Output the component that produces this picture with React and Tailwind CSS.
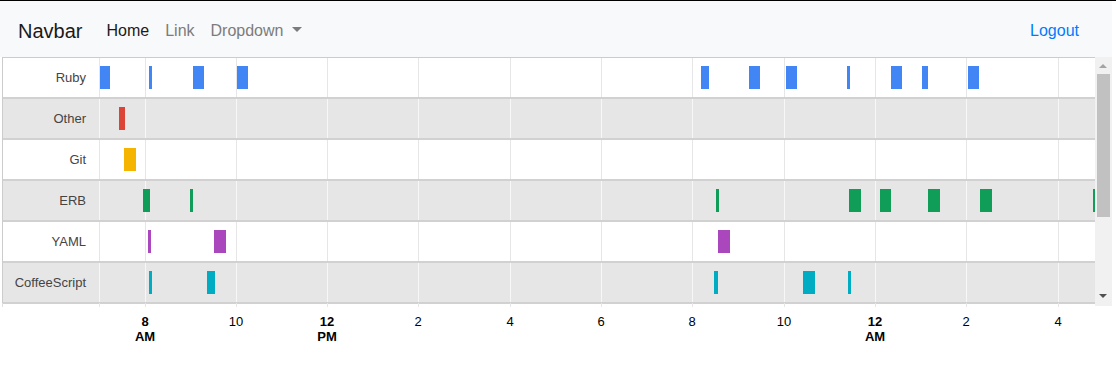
const rows = [
  { label: 'Ruby', color: '#4285f4', bars: [[1, 10], [50, 3], [94, 11], [138, 11], [602, 8], [650, 11], [687, 11], [748, 3], [792, 11], [823, 6], [869, 11]] },
  { label: 'Other', color: '#db4437', bars: [[20, 6]] },
  { label: 'Git', color: '#f4b400', bars: [[25, 12]] },
  { label: 'ERB', color: '#0f9d58', bars: [[44, 7], [91, 3], [617, 3], [750, 12], [781, 11], [829, 12], [881, 12], [994, 6]] },
  { label: 'YAML', color: '#ab47bc', bars: [[49, 3], [115, 12], [619, 12]] },
  { label: 'CoffeeScript', color: '#00acc1', bars: [[50, 3], [108, 8], [615, 4], [704, 12], [749, 3]] },
];

// gridlines, relative to the start of the timeline track (x = 99)
const grid = [0, 46, 137, 228, 319, 411, 502, 593, 685, 776, 867, 959];

const ticks = [
  { x: 145, top: '8', bottom: 'AM' },
  { x: 236, top: '10' },
  { x: 327, top: '12', bottom: 'PM' },
  { x: 418, top: '2' },
  { x: 510, top: '4' },
  { x: 601, top: '6' },
  { x: 692, top: '8' },
  { x: 784, top: '10' },
  { x: 875, top: '12', bottom: 'AM' },
  { x: 966, top: '2' },
  { x: 1058, top: '4' },
];

function Navbar() {
  return (
    <nav className="w-[1112px] h-[56px] bg-[#f8f9fa] flex items-center justify-between pl-[18px] pr-[25px] pt-[3px]">
      <div className="flex items-center">
        <a className="text-[20px] text-[#1a1a1a] mr-4">Navbar</a>
        <a className="px-2 text-[16px] text-[#1a1a1a]">Home</a>
        <a className="px-2 text-[16px] text-[#7c7c7d]">Link</a>
        <a className="px-2 text-[16px] text-[#7c7c7d] flex items-center">
          Dropdown
          <span className="ml-[9px] mb-[2px] w-0 h-0 border-x-[5px] border-x-transparent border-t-[5px] border-t-[#7c7c7d]" />
        </a>
      </div>
      <a className="px-2 text-[16px] text-[#007bff]">Logout</a>
    </nav>
  );
}

function Scrollbar() {
  return (
    <div className="relative w-[17px] h-[249px] bg-[#f1f1f1]">
      <span className="absolute left-[4px] top-[7px] w-0 h-0 border-x-[4px] border-x-transparent border-b-[4px] border-b-[#a3a3a3]" />
      <div className="absolute left-[2px] top-[17px] w-[13px] h-[143px] bg-[#c1c1c1]" />
      <span className="absolute left-[4px] top-[237px] w-0 h-0 border-x-[4px] border-x-transparent border-t-[4px] border-t-[#505050]" />
    </div>
  );
}

function Timeline() {
  return (
    <div className="flex ml-[2px]">
      <div className="w-[1093px] border-t border-l border-[#cccccc]">
        {rows.map((row, i) => {
          const shaded = i % 2 === 1;
          return (
            <div
              key={row.label}
              className={`flex h-[41px] border-b-2 border-[#d1d1d1] ${shaded ? 'bg-[#e6e6e6]' : 'bg-white'}`}
            >
              <div className="w-[96px] shrink-0 flex items-center justify-end pr-[13px] text-[13px] text-[#444444]">
                {row.label}
              </div>
              <div className="relative flex-1 overflow-hidden">
                {grid.map((g) => (
                  <div
                    key={g}
                    className={`absolute top-0 bottom-0 w-px ${shaded ? 'bg-[#f7f7f7]' : 'bg-[#e6e6e6]'}`}
                    style={{ left: g }}
                  />
                ))}
                {row.bars.map(([left, width], j) => (
                  <div
                    key={j}
                    className="absolute top-[8px] h-[23px]"
                    style={{ left, width, background: row.color }}
                  />
                ))}
              </div>
            </div>
          );
        })}
      </div>
      <Scrollbar />
    </div>
  );
}

function Axis() {
  return (
    <div className="relative h-[60px] -mt-[3px]">
      <div className="absolute left-[2px] top-0 w-px h-[4px] bg-[#e0e0e0]" />
      {grid.map((g) => (
        <div key={g} className="absolute top-0 w-px h-[4px] bg-[#e6e6e6]" style={{ left: 99 + g }} />
      ))}
      {ticks.map((t) => (
        <div
          key={t.x}
          className={`absolute top-[11px] -translate-x-1/2 text-center text-[13px] leading-[15px] text-black ${t.bottom ? 'font-bold' : ''}`}
          style={{ left: t.x }}
        >
          <div>{t.top}</div>
          {t.bottom && <div>{t.bottom}</div>}
        </div>
      ))}
    </div>
  );
}

export default function App() {
  return (
    <div className="w-[1116px] h-[373px] bg-white border-t border-black overflow-hidden font-['Liberation_Sans',Arial,sans-serif]">
      <Navbar />
      <Timeline />
      <Axis />
    </div>
  );
}
